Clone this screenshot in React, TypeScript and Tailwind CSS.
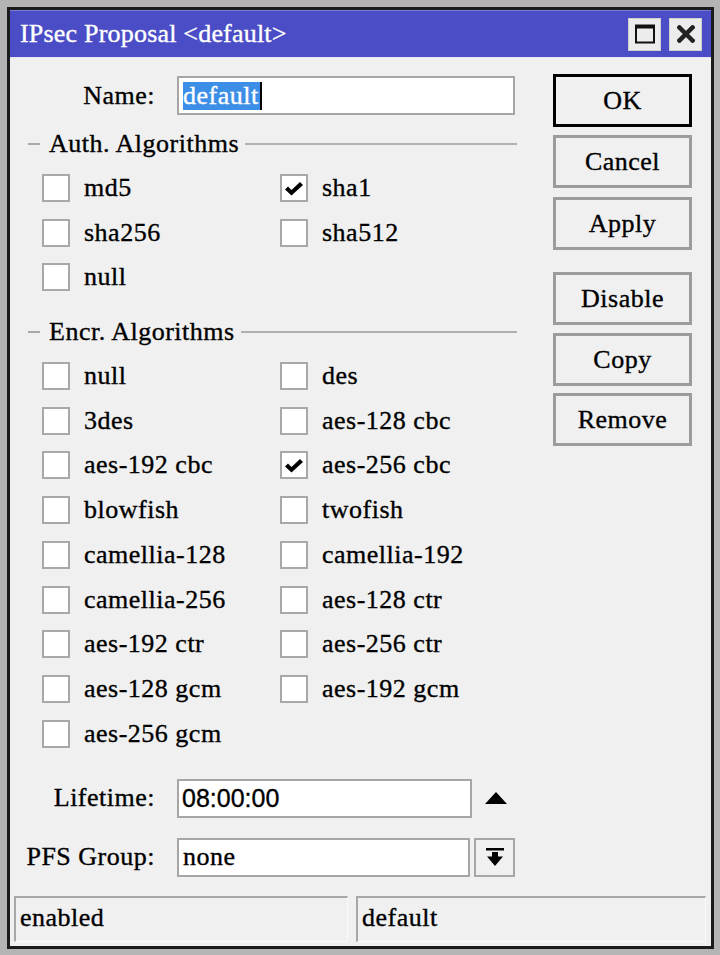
import React from "react";

const Check = () => (
  <svg width="18" height="14" viewBox="0 0 18 14">
    <path d="M0 7.5 L3 4.5 L6.5 8 L15 0 L18 3 L6.5 13.5 Z" fill="#000" />
  </svg>
);

function Box({ checked }: { checked?: boolean }) {
  return (
    <div className="w-[28px] h-[28px] border-2 border-[#a8a8a8] bg-white flex items-center justify-center shrink-0">
      {checked && (
        <div className="mt-[2px]">
          <Check />
        </div>
      )}
    </div>
  );
}

function Item({ label, checked }: { label?: string; checked?: boolean }) {
  if (!label) return <div className="h-[44.75px]" />;
  return (
    <div className="flex items-center h-[44.75px]">
      <Box checked={checked} />
      <span className="ml-[14px] whitespace-nowrap">{label}</span>
    </div>
  );
}

function Header({ title }: { title: string }) {
  return (
    <div className="flex items-center h-[28px] ml-[18px]">
      <div className="w-[12px] border-t-2 border-[#a8a8a8]" />
      <span className="ml-[9px] mr-[6px] whitespace-nowrap">{title}</span>
      <div className="flex-1 border-t-2 border-[#b0b0b0]" />
    </div>
  );
}

function Btn({ label, primary, className = "" }: { label: string; primary?: boolean; className?: string }) {
  return (
    <div
      className={
        "w-[139px] h-[53px] flex items-center justify-center bg-[#f0f0f0] " +
        (primary ? "border-[3px] border-black " : "border-[3px] border-[#9c9c9c] ") +
        className
      }
    >
      {label}
    </div>
  );
}

const auth: [string, boolean][] = [
  ["md5", false],
  ["sha1", true],
  ["sha256", false],
  ["sha512", false],
  ["null", false],
];

const encr: [string, boolean][] = [
  ["null", false],
  ["des", false],
  ["3des", false],
  ["aes-128 cbc", false],
  ["aes-192 cbc", false],
  ["aes-256 cbc", true],
  ["blowfish", false],
  ["twofish", false],
  ["camellia-128", false],
  ["camellia-192", false],
  ["camellia-256", false],
  ["aes-128 ctr", false],
  ["aes-192 ctr", false],
  ["aes-256 ctr", false],
  ["aes-128 gcm", false],
  ["aes-192 gcm", false],
  ["aes-256 gcm", false],
];

export default function App() {
  return (
    <div className="w-[720px] h-[955px] bg-[#b4b4b4] pl-[7px] pr-[6px] pt-[7px] pb-[6px] font-['Liberation_Serif','Times_New_Roman',serif] text-[26px] leading-none tracking-[0.5px] text-black [-webkit-text-stroke:0.35px_currentColor]">
      <div className="w-full h-full border-[3px] border-[#1c1c1c] bg-[#f0f0f0] flex flex-col">
        {/* Title bar */}
        <div className="h-[48px] bg-[#4b4dc6] border-t border-[#7a7dd8] border-b border-b-[#e6e6f2] flex items-center pl-[10px] pr-[9px]">
          <span className="text-white tracking-[0.2px] whitespace-nowrap">IPsec Proposal &lt;default&gt;</span>
          <div className="ml-auto flex gap-[8px]">
            <div className="w-[33px] h-[33px] bg-[#ececec] border border-[#cfcfcf] flex items-center justify-center">
              <svg width="20" height="20" viewBox="0 0 20 20">
                <rect x="1" y="1.5" width="18" height="17" fill="none" stroke="#111" strokeWidth="2" />
                <rect x="1" y="1" width="18" height="3.5" fill="#111" />
              </svg>
            </div>
            <div className="w-[33px] h-[33px] bg-[#ececec] border border-[#cfcfcf] flex items-center justify-center">
              <svg width="18" height="18" viewBox="0 0 18 18">
                <path d="M2.5 2.5 L15.5 15.5 M15.5 2.5 L2.5 15.5" stroke="#222" strokeWidth="4.5" strokeLinecap="square" />
              </svg>
            </div>
          </div>
        </div>

        {/* Main */}
        <div className="flex flex-1">
          <div className="w-[507px] flex flex-col">
            {/* Name */}
            <div className="flex items-center mt-[18px]">
              <div className="w-[145px] text-right">Name:</div>
              <div className="ml-[22px] w-[338px] h-[39px] border-2 border-[#a6a6a6] bg-white flex items-center pl-[4px]">
                <span className="h-[28px] bg-[#3d8ee6] text-white flex items-center pr-[1px] border-r-2 border-black">default</span>
              </div>
            </div>

            <div className="mt-[15px]">
              <Header title="Auth. Algorithms" />
            </div>
            <div className="grid grid-cols-[238px_1fr] pl-[32px] mt-[7.6px]">
              {auth.map(([l, c], i) => (
                <Item key={i} label={l} checked={c} />
              ))}
            </div>

            <div className="mt-[18px]">
              <Header title="Encr. Algorithms" />
            </div>
            <div className="grid grid-cols-[238px_1fr] pl-[32px] mt-[7.6px]">
              {encr.map(([l, c], i) => (
                <Item key={i} label={l} checked={c} />
              ))}
            </div>

            {/* Lifetime */}
            <div className="flex items-center mt-[22.6px]">
              <div className="w-[145px] text-right">Lifetime:</div>
              <div className="ml-[22px] w-[295px] h-[39px] border-2 border-[#a6a6a6] bg-white flex items-center pl-[3px] font-['Liberation_Sans',sans-serif] tracking-[0px] text-[25px]">
                08:00:00
              </div>
              <svg className="ml-[13px]" width="22" height="12" viewBox="0 0 22 12">
                <path d="M11 0 L22 12 L0 12 Z" fill="#000" />
              </svg>
            </div>

            {/* PFS Group */}
            <div className="flex items-center mt-[20px]">
              <div className="w-[145px] text-right">PFS Group:</div>
              <div className="ml-[22px] w-[293px] h-[39px] border-2 border-[#a6a6a6] bg-white flex items-center pl-[4px]">
                none
              </div>
              <div className="ml-[4px] w-[41px] h-[39px] border-2 border-[#a6a6a6] bg-[#f0f0f0] flex items-center justify-center">
                <svg width="20" height="20" viewBox="0 0 20 20">
                  <rect x="1" y="1" width="18" height="2.5" fill="#000" />
                  <rect x="7" y="5" width="6" height="5" fill="#000" />
                  <path d="M2 9.5 L18 9.5 L10 19 Z" fill="#000" />
                </svg>
              </div>
            </div>
          </div>

          {/* Buttons */}
          <div className="ml-[36px] w-[139px] flex flex-col mt-[16px]">
            <Btn label="OK" primary />
            <Btn label="Cancel" className="mt-[8px]" />
            <Btn label="Apply" className="mt-[9px]" />
            <Btn label="Disable" className="mt-[22px]" />
            <Btn label="Copy" className="mt-[8px]" />
            <Btn label="Remove" className="mt-[7px]" />
          </div>
        </div>

        {/* Status bar */}
        <div className="h-[50px] flex pl-[4px] pr-[5px] gap-[8px]">
          <div className="w-[334px] h-[46px] border-t-2 border-l-2 border-[#a8a8a8] border-r border-b border-r-[#fafafa] border-b-[#fafafa] flex items-center pl-[4px] pb-[4px]">
            enabled
          </div>
          <div className="flex-1 h-[46px] border-t-2 border-l-2 border-[#a8a8a8] border-r border-b border-r-[#fafafa] border-b-[#fafafa] flex items-center pl-[4px] pb-[4px]">
            default
          </div>
        </div>
      </div>
    </div>
  );
}
